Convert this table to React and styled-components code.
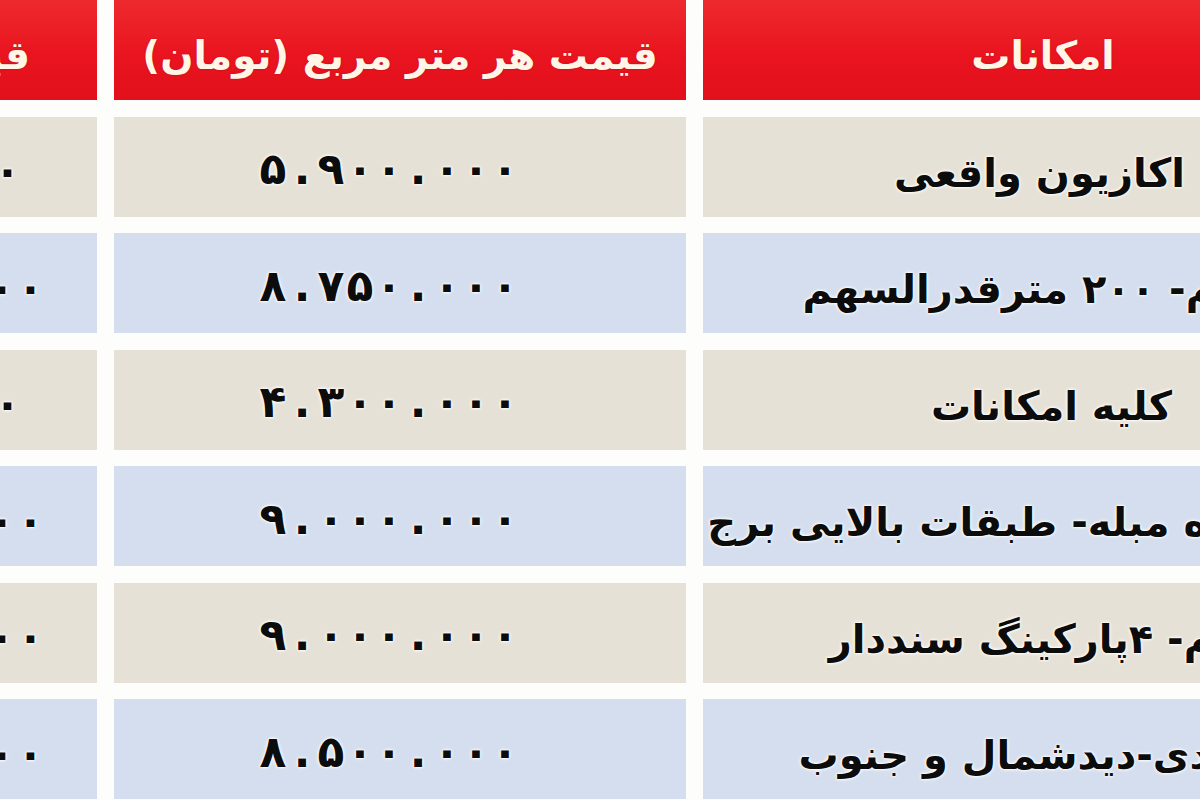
import React from 'react';
import styled, { createGlobalStyle, css } from 'styled-components';

const Global = createGlobalStyle`
  html, body {
    margin: 0;
    padding: 0;
    background: #ffffff;
    overflow: hidden;
  }
  body {
    font-family: "DejaVu Sans", "Noto Sans", sans-serif;
  }
`;

const Viewport = styled.div`
  width: 1200px;
  height: 800px;
  overflow: hidden;
  background: #fdfdfc;
`;

const Table = styled.div`
  display: grid;
  grid-template-columns: 300px 572px 680px;
  grid-auto-rows: 100px;
  column-gap: 17px;
  row-gap: 16.5px;
  margin-left: -203px;
  width: max-content;
`;

const tones = {
  head: css`
    background: linear-gradient(#ee2a2e 0%, #e9141f 55%, #e1101b 100%);
    color: #fff6e8;
  `,
  beige: css`
    background: #e6e1d6;
    color: #0c0c0c;
  `,
  blue: css`
    background: #d4deee;
    color: #0c0c0c;
  `,
};

const Cell = styled.div`
  direction: rtl;
  display: flex;
  align-items: center;
  justify-content: ${(p) => (p.$center ? 'center' : 'flex-start')};
  padding-right: ${(p) => p.$pad || 0}px;
  padding-top: ${(p) => p.$top || 0}px;
  box-sizing: border-box;
  overflow: hidden;
  white-space: nowrap;
  font-weight: 700;
  ${(p) => tones[p.$tone]}
`;

const HeadText = styled.span`
  font-size: 39px;
  text-shadow: 0 0 2px rgba(120, 0, 0, 0.35);
`;

const BodyText = styled.span`
  font-size: 40px;
  text-shadow: 0 0 2px #fff, 0 0 3px #fff, 0 0 4px rgba(255, 255, 255, 0.9);
`;

const NumberRow = styled.span`
  direction: ltr;
  display: inline-flex;
  align-items: center;
`;

const Glyph = styled.span`
  width: 29px;
  text-align: center;
  font-size: 44px;
  text-shadow: 0 0 2px #fff, 0 0 3px #fff, 0 0 4px rgba(255, 255, 255, 0.9);
`;

function Digits({ value }) {
  return (
    <NumberRow>
      {Array.from(value).map((ch, i) => (
        <Glyph key={i}>{ch}</Glyph>
      ))}
    </NumberRow>
  );
}

const rows = [
  { tone: 'beige', total: '۰', totalPad: 75, price: '۵.۹۰۰.۰۰۰', desc: 'اکازیون واقعی', descPad: 198 },
  { tone: 'blue', total: '۰۰', totalPad: 52, price: '۸.۷۵۰.۰۰۰', desc: 'م- ۲۰۰ مترقدرالسهم', descPad: 168 },
  { tone: 'beige', total: '۰', totalPad: 75, price: '۴.۳۰۰.۰۰۰', desc: 'کلیه امکانات', descPad: 211 },
  { tone: 'blue', total: '۰۰', totalPad: 52, price: '۹.۰۰۰.۰۰۰', desc: 'ه مبله- طبقات بالایی برج', descPad: 176 },
  { tone: 'beige', total: '۰۰', totalPad: 52, price: '۹.۰۰۰.۰۰۰', desc: 'م- ۴پارکینگ سنددار', descPad: 170 },
  { tone: 'blue', total: '۰۰', totalPad: 52, price: '۸.۵۰۰.۰۰۰', desc: 'دی-دیدشمال و جنوب', descPad: 173 },
];

export default function App() {
  return (
    <Viewport>
      <Global />
      <Table>
        <Cell $tone="head" $pad={67} $top={10}>
          <HeadText>قیمت کل</HeadText>
        </Cell>
        <Cell $tone="head" $center $top={10}>
          <HeadText>قیمت هر متر مربع (تومان)</HeadText>
        </Cell>
        <Cell $tone="head" $center $top={10}>
          <HeadText>امکانات</HeadText>
        </Cell>
        {rows.map((r, i) => (
          <React.Fragment key={i}>
            <Cell $tone={r.tone} $pad={r.totalPad} $top={8}>
              <Digits value={r.total} />
            </Cell>
            <Cell $tone={r.tone} $center $pad={22} $top={4}>
              <Digits value={r.price} />
            </Cell>
            <Cell $tone={r.tone} $pad={r.descPad} $top={12}>
              <BodyText>{r.desc}</BodyText>
            </Cell>
          </React.Fragment>
        ))}
      </Table>
    </Viewport>
  );
}
